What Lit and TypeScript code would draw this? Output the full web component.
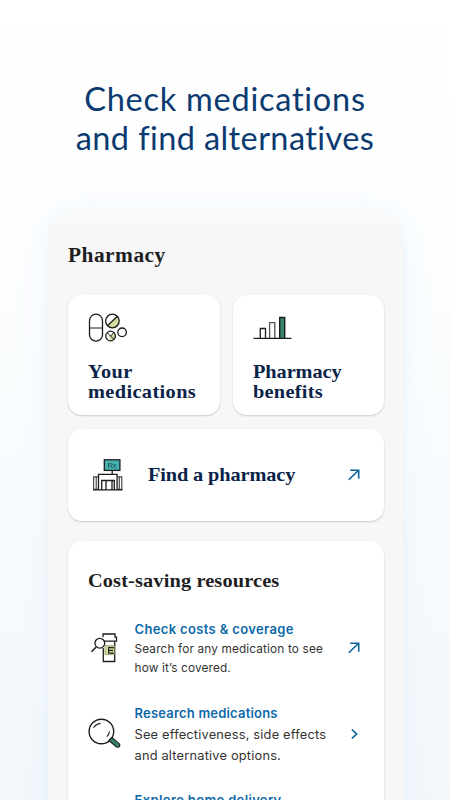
import { LitElement, html, css, svg } from "lit";
import { customElement } from "lit/decorators.js";

const arrow = html`<svg class="arrow" width="12" height="12" viewBox="0 0 12 12" fill="none" stroke="#0b6399" stroke-width="1.6"><path d="M.8 10.8 10.6 1.2M2.2 1.2h8.5v8.6"/></svg>`;
const chevron = html`<svg class="arrow" width="12" height="12" viewBox="0 0 12 12" fill="none" stroke="#0b6399" stroke-width="1.7"><path d="M3.9 1.5 8.5 6 3.9 10.5"/></svg>`;

const pills = html`<svg width="40" height="30" viewBox="0 0 40 30" fill="none" stroke="#1c1c1c" stroke-width="1.3">
  <rect x="1.5" y="1.2" width="13" height="27" rx="6.5"/><path d="M1.5 15h13" stroke-width="1"/>
  <path d="M29.3 3.2A6.8 6.8 0 0 1 19.5 12.8Z" fill="#d3dda0" stroke="none"/>
  <circle cx="24.4" cy="8" r="6.8"/><path d="M19.4 12.8 29.4 3.2"/>
  <path d="M19.2 19.6 22.7 23 26 19.6A4.8 4.8 0 0 1 26 26.4 4.8 4.8 0 0 1 22.6 27.8Z" fill="#d3dda0" stroke="none"/>
  <circle cx="22.6" cy="23" r="4.8"/><path d="m19.2 19.6 6.8 6.8M22.7 23l3-3.4" stroke-width="1"/>
  <circle cx="34.1" cy="19.3" r="4.3"/></svg>`;

const bars = html`<svg width="40" height="30" viewBox="0 0 40 30" fill="none" stroke="#1c1c1c" stroke-width="1.3">
  <path d="M7.3 25V15.5h5.2V25"/><path d="M16.6 25V9.7h5.2V25" stroke="#555"/>
  <path d="M26.7 25V4.5h5V25" fill="#36866b" stroke-width="1.4"/><path d="M.5 25.4h38"/></svg>`;

const store = html`<svg width="32" height="34" viewBox="0 0 32 34" fill="none" stroke="#1c1c1c" stroke-width="1.3">
  <rect x="12.3" y="1.8" width="15.6" height="10.6" fill="#45b1ae"/>
  ${svg`<text x="20" y="9.7" class="rx">Rx</text>`}
  <path d="M20.2 12.4V16M6.5 31.7V16.3h18.6v15.4"/>
  <path d="M6.5 18.9H1.6v12.5h4.5M25 18.9h4.8v12.5H25M4.2 19v12M27.3 19v12" stroke-width="1.1" stroke="#3c3c3c"/>
  <path d="M9.7 31.5v-9h12.6v9M14 22.7v9M20 22.7v9M1 31.8h29.5"/></svg>`;

const bottle = html`<svg width="28" height="31" viewBox="0 0 28 31" fill="none" stroke="#1c1c1c" stroke-width="1.3">
  <path d="M15.3 15v13.5h11.4V8.3"/>
  <path d="M15 4.2V1h12v3.2h1.5v3.9H14"/>
  <path d="M17 12.6h9.3v9H17Z" fill="#d3dda0" stroke="#899261" stroke-width=".7"/><path d="M25.8 14.6h-5.2v5.5h5.2M20.6 17.4h4.4" stroke-width="1.1"/>
  <circle cx="11.8" cy="10.2" r="4.9" fill="#fff"/><path d="m8.2 14-4.8 4.8" stroke-width="1.6"/></svg>`;

const magnifier = html`<svg width="34" height="32" viewBox="0 0 34 32" fill="none" stroke="#1c1c1c" stroke-width="1.4">
  <circle cx="13.4" cy="13.5" r="12.3"/><path d="M5.6 9.8q2.4-3.8 7-4.4M21.6 13.4q-.5 3.2-2.8 5.2" stroke-width="1.1"/>
  <path d="m20.8 22.5 7.6 6.2a2 2 0 0 0 2.8-3l-7.4-6.3Z" fill="#36866b" stroke-width="1.1"/></svg>`;

@customElement("app-root")
class AppRoot extends LitElement {
  static styles = css`
    :host { display: block; height: 800px; overflow: hidden; font-family: Inter, sans-serif;
      background: linear-gradient(180deg, #fff 0, #fdfeff 170px, #f8fbfd 480px, #f2f7fb 800px); }
    * { box-sizing: border-box; }
    svg { display: block; overflow: visible; flex: none; }
    h1, h2, h3, p { margin: 0; font-weight: 400; white-space: nowrap; }
    h1 { padding-top: 79px; height: 208px; text-align: center; color: #0b3a70;
      font: 400 32.5px/39px Lato, sans-serif; letter-spacing: .4px; }
    h1 span { display: block; }
    .lead { letter-spacing: .75px; }
    .phone { margin: 0 46px 0 48px; height: 640px; padding: 33px 20px 0; border-radius: 30px 30px 0 0;
      background: linear-gradient(180deg, #f9fbfc 0, #f7f7f7 22px);
      box-shadow: 0 16px 2px #dcebf7, 0 2px 24px rgba(205, 229, 249, .3); }
    h2, h3 { font: 700 19px/20px "Liberation Serif", serif; color: #0a2348;
      transform: scaleX(1.07); transform-origin: left; }
    .dark { color: #1e1e1e; }
    .title { height: 54px; line-height: 28px; font-size: 20px; letter-spacing: .45px; }
    .pair { display: grid; grid-template-columns: 152px 151px; gap: 13px; height: 120px; }
    .card { background: #fff; border-radius: 14px; box-shadow: 0 1px 2px rgba(0, 0, 0, .19); }
    .tile { padding: 18px 20px 0; }
    .tile h3 { margin-top: 19px; }
    .your { letter-spacing: .45px; }
    .meds { letter-spacing: .36px; }
    .pharm { letter-spacing: -.08px; }
    .bene { letter-spacing: .25px; }
    .find { width: 316px; height: 92px; margin-top: 13.5px; padding: 0 24px; display: flex; align-items: center; }
    .find h3 { margin-left: 24px; padding-top: 1px; letter-spacing: -.12px; }
    .arrow { margin-left: auto; }
    .resources { width: 316px; height: 300px; margin-top: 20.5px; padding: 27px 24px 0 20px; }
    .resources h2 { line-height: 26px; letter-spacing: .13px; }
    .row { display: flex; align-items: center; }
    .icon { width: 46.5px; flex: none; }
    .first { margin-top: 24px; height: 60px; }
    .first .link { line-height: 20px; margin-bottom: 1px; }
    .second { margin-top: 24px; height: 64px; }
    .third { margin-top: 22px; height: 24px; }
    .link { font-size: 13px; font-weight: 600; line-height: 22px; color: #0d69a9; letter-spacing: .35px; }
    .text { font-size: 11.8px; line-height: 18.5px; color: #333; letter-spacing: .15px; }
    .second .link { letter-spacing: .2px; }
    .second .text { font-size: 12.8px; line-height: 21px; letter-spacing: .2px; }
    .rx { font: 7.5px "Liberation Sans", sans-serif; fill: #164f50; stroke: none; text-anchor: middle; }
  `;
  render() {
    return html`
      <h1><span class="lead">Check medications</span><span>and find alternatives</span></h1>
      <main class="phone">
        <h2 class="title dark">Pharmacy</h2>
        <div class="pair">
          <section class="card tile">${pills}<h3><span class="your">Your</span><br><span class="meds">medications</span></h3></section>
          <section class="card tile">${bars}<h3><span class="pharm">Pharmacy</span><br><span class="bene">benefits</span></h3></section>
        </div>
        <section class="card find">${store}<h3>Find a pharmacy</h3>${arrow}</section>
        <section class="card resources">
          <h2 class="dark">Cost-saving resources</h2>
          <div class="row first"><div class="icon">${bottle}</div>
            <div><p class="link">Check costs &amp; coverage</p><p class="text">Search for any medication to see<br>how it’s covered.</p></div>${arrow}</div>
          <div class="row second"><div class="icon">${magnifier}</div>
            <div><p class="link">Research medications</p><p class="text">See effectiveness, side effects<br>and alternative options.</p></div>${chevron}</div>
          <div class="row third"><div class="icon"></div><p class="link">Explore home delivery</p></div>
        </section>
      </main>`;
  }
}
